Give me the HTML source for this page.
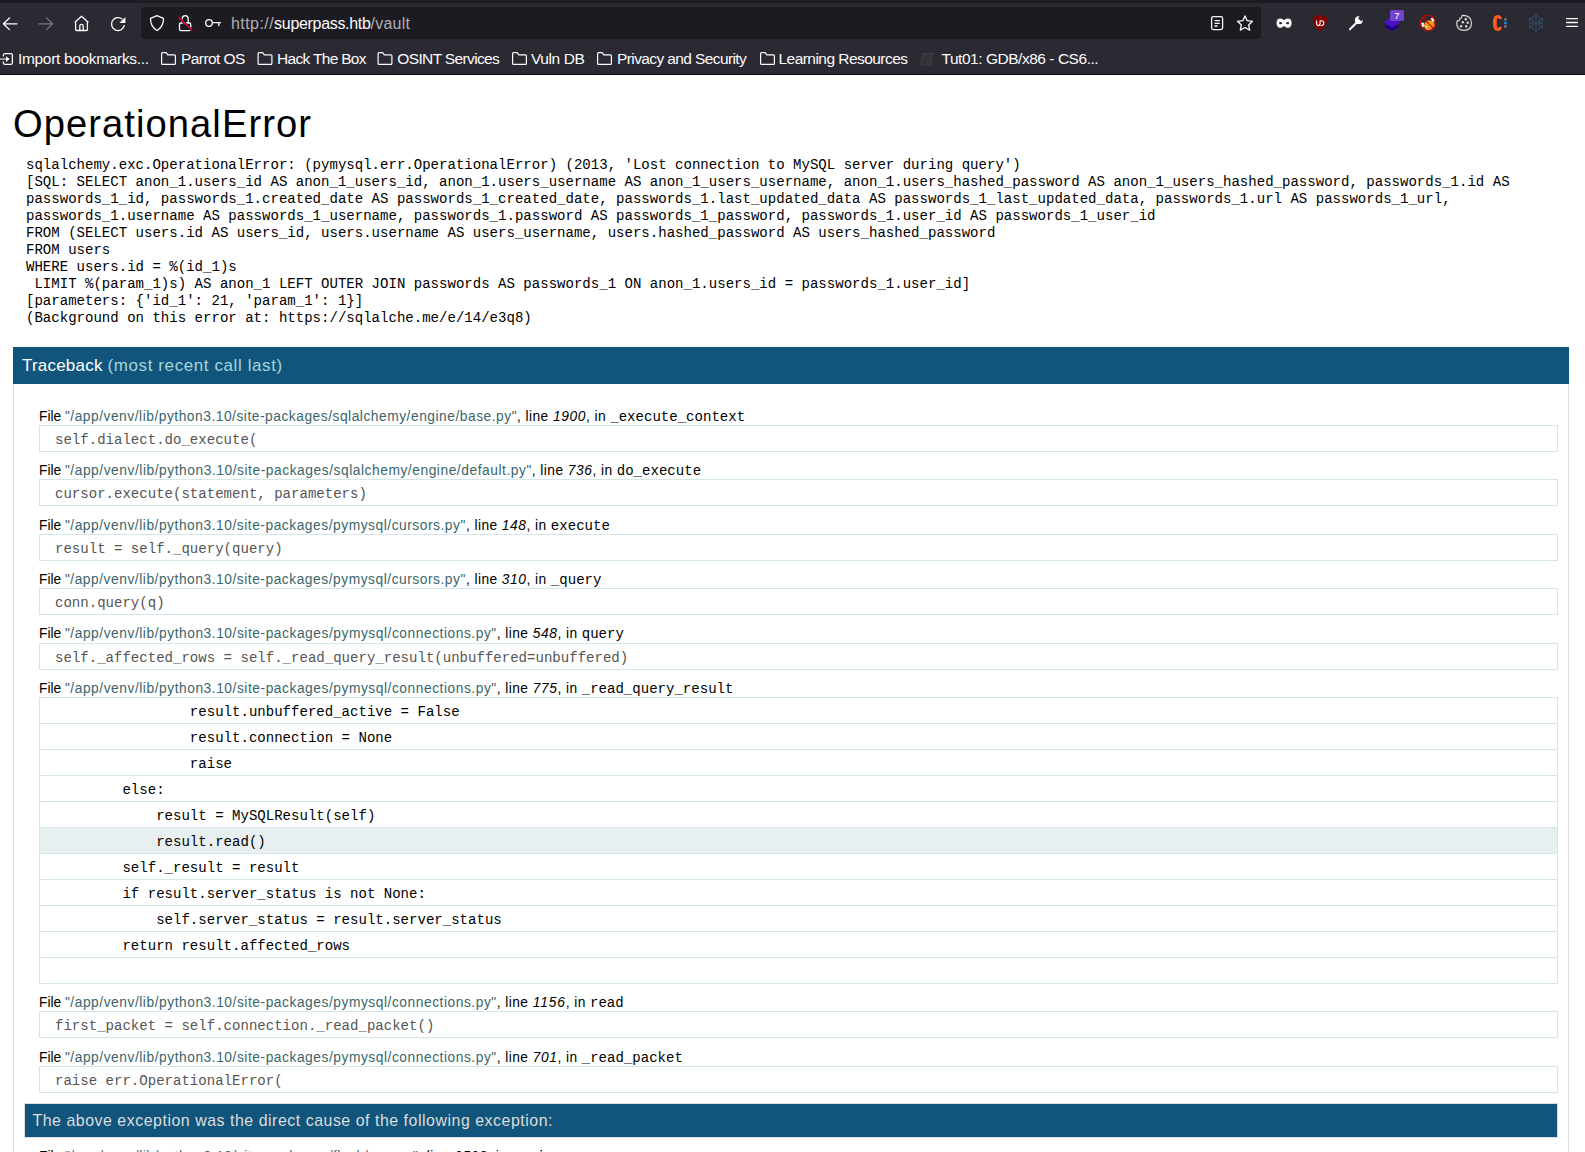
<!DOCTYPE html>
<html><head><meta charset="utf-8">
<style>
*{box-sizing:border-box}
html,body{margin:0;padding:0;background:#fff;width:1585px;height:1152px;overflow:hidden;position:relative}
body{font-family:"Liberation Sans",sans-serif;color:#000}
#chrome{position:absolute;left:0;top:0;width:1585px;height:75px;font-family:"Liberation Sans",sans-serif}
#url{position:absolute;left:231px;top:13.5px;height:20px;font-size:16px;line-height:20px;color:#aeaeb3;white-space:pre}
#url b{font-weight:normal;color:#fbfbfe}
.bm{position:absolute;top:48px;height:22px;font-size:15px;line-height:22px;color:#fbfbfe;white-space:pre}
#page{position:absolute;left:0;top:75px;width:1585px;height:1077px;overflow:hidden}
h1{position:absolute;left:13px;top:28px;margin:0;font-weight:normal;font-size:36px;line-height:42px;white-space:pre}
#detail{position:absolute;left:26px;top:81.6px;margin:0;font-family:"Liberation Mono",monospace;font-size:14.065px;line-height:17px;white-space:pre}
h2{position:absolute;left:13px;top:272px;width:1556px;height:37px;margin:0;padding:0 9px;background:#11557C;color:#fff;font-weight:normal;font-size:16px;line-height:37px;white-space:pre}
h2 em{font-style:normal;color:#A5D6D9}
#tb{position:absolute;left:13px;top:309px;width:1556px;height:900px;border:1px solid #ddd;border-top:none}
#frames{position:absolute;left:25px;top:22.8px;width:1519px}
.fr h4{margin:9.1px 0 1.3px 0;height:17px;padding-top:1px;font-weight:normal;font-size:13px;line-height:17px;white-space:pre}
.fr h4 cite{font-style:normal;color:#3B666B}
.fr h4 em{font-style:italic}
.fr h4 code{font-family:"Liberation Mono",monospace;font-size:14.065px}
.fr:first-child h4{margin-top:0}
pre{margin:0;padding:6px 0 3px 15px;border:1px solid #D3E7E9;height:27px;font-family:"Liberation Mono",monospace;font-size:14.065px;line-height:17px;white-space:pre;color:#555;background:#fff}
.exp pre{color:#000}
.exp pre+pre{border-top:none;height:26px}
.exp pre.cur{background:#E8EFF0}
.div{margin:10.5px 0 0 -15px;padding:1px 7.5px 0;height:34.5px;background:#11557C;color:#ddd;border:1px solid #ddd;font-size:15px;line-height:32.5px;white-space:pre}
</style></head>
<body>
<div id="chrome">
<svg width="1585" height="75" viewBox="0 0 1585 75" style="position:absolute;left:0;top:0">
 <rect x="0" y="0" width="1585" height="75" fill="#2b2a33"/>
 <rect x="0" y="0" width="1585" height="3" fill="#1c1b22"/>
 <rect x="0" y="74" width="1585" height="1" fill="#0b0b0e"/>
 <rect x="141" y="7" width="1120" height="32" rx="4" fill="#1c1b22"/>
 <!-- back -->
 <g fill="none" stroke="#fbfbfe" stroke-width="1.3" stroke-linecap="round" stroke-linejoin="round">
  <path d="M17 23.8H3.6M9.5 18 3.4 23.8 9.5 29.6"/>
 </g>
 <g fill="none" stroke="#76757c" stroke-width="1.3" stroke-linecap="round" stroke-linejoin="round">
  <path d="M39 23.8H52.4M46.5 18 52.6 23.8 46.5 29.6"/>
 </g>
 <!-- home -->
 <g fill="none" stroke="#fbfbfe" stroke-width="1.3" stroke-linejoin="round">
  <path d="M74.6 22.4 81.5 16.2 88.4 22.4M75.6 21.6V29.4Q75.6 30.5 76.7 30.5H86.3Q87.4 30.5 87.4 29.4V21.6"/>
  <path d="M79.8 30.5V25.8Q79.8 24.3 81.5 24.3 83.2 24.3 83.2 25.8V30.5"/>
 </g>
 <!-- reload -->
 <g fill="none" stroke="#fbfbfe" stroke-width="1.3">
  <path d="M124.4 25.2A6.5 6.5 0 1 1 122.3 19.2"/>
 </g>
 <path d="M125.4 17 125.4 23 119.4 23Z" fill="#fbfbfe"/>
 <!-- shield -->
 <path d="M157 15.7 163.5 18.3Q163.8 26.5 157 30.5 150.2 26.5 150.5 18.3Z" fill="none" stroke="#fbfbfe" stroke-width="1.3" stroke-linejoin="round"/>
 <!-- lock -->
 <g fill="none" stroke="#fbfbfe" stroke-width="1.3">
  <path d="M182.2 23V18.8Q182.2 15.6 185.2 15.6 188.2 15.6 188.2 18.8V23"/>
  <rect x="179.5" y="23" width="11.2" height="7.6" rx="1.3"/>
 </g>
 <path d="M178.4 17.2 192.4 30.6" stroke="#1c1b22" stroke-width="2.6"/>
 <path d="M178.4 17.2 192.4 30.6" stroke="#ff0039" stroke-width="1.3"/>
 <!-- key -->
 <g fill="none" stroke="#fbfbfe" stroke-width="1.3">
  <circle cx="209" cy="23" r="3.3"/>
  <path d="M212.3 22.6H221M218.8 22.6V26.2"/>
 </g>
 <!-- reader -->
 <g fill="none" stroke="#fbfbfe" stroke-width="1.3">
  <rect x="1211.6" y="16.6" width="11" height="13" rx="1.8"/>
  <path d="M1214.5 20.6H1219.8M1214.5 23.3H1219.8M1214.5 26H1217.6"/>
 </g>
 <!-- star -->
 <path d="M1245 15.9 1247.2 20.7 1252.5 21.3 1248.6 24.9 1249.7 30.1 1245 27.5 1240.3 30.1 1241.4 24.9 1237.5 21.3 1242.8 20.7Z" fill="none" stroke="#fbfbfe" stroke-width="1.3" stroke-linejoin="round"/>
 <!-- mask -->
 <path d="M1276.6 22.8Q1276.6 18.4 1280.2 18.4Q1282.6 18.4 1284 20.2Q1285.4 18.4 1287.8 18.4Q1291.6 18.4 1291.6 22.8Q1291.6 27.9 1287.8 27.9Q1285.6 27.9 1284 26.1Q1282.4 27.9 1280.2 27.9Q1276.6 27.9 1276.6 22.8Z" fill="#fbfbfe"/>
 <ellipse cx="1280.6" cy="23.2" rx="1.6" ry="1.1" fill="#2b2a33"/>
 <ellipse cx="1287.6" cy="23.2" rx="1.6" ry="1.1" fill="#2b2a33"/>
 <!-- ublock -->
 <path d="M1320 15 1327.2 17.3Q1327.2 27.6 1320 31 1312.9 27.6 1312.9 17.3Z" fill="#800000"/>
 <path d="M1316.6 20.6V23.6Q1316.6 25.6 1318.4 25.6 1320.1 25.6 1320.1 23.6V20.6M1320.6 20.7H1321.3Q1323.8 20.7 1323.8 23.1 1323.8 25.5 1321.3 25.5H1320.6" fill="none" stroke="#fff" stroke-width="1.1"/>
 <!-- wrench -->
 <path d="M1350 29.3 1356.8 22.5" stroke="#fbfbfe" stroke-width="2" stroke-linecap="round"/>
 <circle cx="1358.8" cy="20.2" r="3.9" fill="#fbfbfe"/>
 <path d="M1360.2 15.6 1363.6 19 1361.2 21.3 1358.1 18.2Z" fill="#2b2a33"/>
 <!-- layers -->
 <path d="M1392 22.6 1400.2 26.7 1392 31 1383.8 26.7Z" fill="#1c0082"/>
 <path d="M1392 17 1400.2 22.2 1392 27.4 1383.8 22.2Z" fill="#4a12c8"/>
 <rect x="1390" y="10" width="14" height="11" rx="1.5" fill="#7143d0"/>
 <text x="1397" y="19" font-family="Liberation Sans" font-size="9.6" fill="#fff" text-anchor="middle">7</text>
 <!-- fox -->
 <path d="M1424 25.5Q1424.5 20.6 1429.6 20.2 1434.6 20.6 1434.8 25.6 1434.4 30 1429.2 30.2 1424.2 30 1424 25.5Z" fill="#f09a12"/>
 <path d="M1430.6 18.2 1433.4 17.4 1434.6 21.6 1432.4 21.8Z" fill="#fff"/>
 <path d="M1420.8 23 1423.6 22.4 1424.4 26.6 1422 27.2Z" fill="#fff"/>
 <circle cx="1426.4" cy="26.6" r="0.8" fill="#fff"/>
 <path d="M1425.6 29.6H1431" stroke="#b8c4cc" stroke-width="0.8"/>
 <circle cx="1428" cy="23" r="7.6" fill="none" stroke="#d40000" stroke-width="1.4"/>
 <path d="M1422.4 17.4 1433.6 28.6" stroke="#d40000" stroke-width="1.3"/>
 <!-- cookie -->
 <path d="M1462.2 15.4Q1471.4 15.2 1471.4 23 1471.4 30.4 1464 30.4 1456.8 30.4 1456.8 23.6 1456.8 21.6 1457.4 20.6 1458.6 21.2 1459.4 20.2 1460.2 19.2 1459.8 18.4 1461.6 18.4 1461.8 16.6Z" fill="none" stroke="#d8d8d8" stroke-width="1.2" stroke-linejoin="round"/>
 <g fill="#d8d8d8"><circle cx="1465.8" cy="19.3" r="1.2"/><circle cx="1462.8" cy="22.3" r="1.2"/><circle cx="1467.7" cy="22.7" r="1.2"/><circle cx="1461.1" cy="26.2" r="1.2"/><circle cx="1466.2" cy="26.3" r="1.2"/></g>
 <!-- C: -->
 <path d="M1502 18.6Q1501 15 1497.6 15 1492.9 15 1492.9 23 1492.9 30.9 1497.6 30.9 1501 30.9 1502 27.4L1499.4 26.6Q1499 28 1497.8 28 1496.7 28 1496.7 23 1496.7 17.8 1497.8 17.8 1499 17.8 1499.4 19.4Z" fill="#ff5a1f"/>
 <circle cx="1505.4" cy="19.3" r="1.5" fill="#707070"/>
 <circle cx="1505.4" cy="23" r="1.6" fill="#1a86f0"/>
 <circle cx="1505.4" cy="26.6" r="1.5" fill="#707070"/>
 <!-- globe -->
 <g fill="none" stroke="#2f4c6c" stroke-width="0.7">
  <path d="M1536 15.2 1542.6 19.1V26.9L1536 30.8 1529.4 26.9V19.1Z"/>
  <path d="M1536 15.2V30.8M1529.4 19.1 1542.6 26.9M1542.6 19.1 1529.4 26.9M1532.7 17.2V28.8M1539.3 17.2V28.8M1529.4 23H1542.6"/>
 </g>
 <g fill="#36587d"><circle cx="1536" cy="15.6" r="0.9"/><circle cx="1536" cy="30.4" r="0.9"/><circle cx="1529.8" cy="19.3" r="0.9"/><circle cx="1542.2" cy="19.3" r="0.9"/><circle cx="1529.8" cy="26.7" r="0.9"/><circle cx="1542.2" cy="26.7" r="0.9"/><circle cx="1540" cy="23" r="0.9"/></g>
 <!-- hamburger -->
 <path d="M1566 18.6H1578M1566 22.5H1578M1566 26.4H1578" stroke="#fbfbfe" stroke-width="1.3"/>
</svg><svg width="1585" height="75" viewBox="0 0 1585 75" style="position:absolute;left:0;top:0"><path d="M3.4 56.6V55.2Q3.4 53.6 5 53.6H10.8Q12.4 53.6 12.4 55.2V62.8Q12.4 64.4 10.8 64.4H5Q3.4 64.4 3.4 62.8V61.6" fill="none" stroke="#fbfbfe" stroke-width="1.25"/><path d="M0 59.1H6.5" stroke="#c8c8cc" stroke-width="1.3"/><path d="M6 56.3 9.6 59.1 6 61.9Z" fill="#fbfbfe"/><path d="M161.6 53.6Q161.6 52.6 162.6 52.6H166.2L167.8 54.8H174.4Q175.4 54.8 175.4 55.8V63.4Q175.4 64.4 174.4 64.4H162.6Q161.6 64.4 161.6 63.4Z" fill="none" stroke="#fbfbfe" stroke-width="1.2" stroke-linejoin="round"/><path d="M258.1 53.6Q258.1 52.6 259.1 52.6H262.7L264.3 54.8H270.9Q271.9 54.8 271.9 55.8V63.4Q271.9 64.4 270.9 64.4H259.1Q258.1 64.4 258.1 63.4Z" fill="none" stroke="#fbfbfe" stroke-width="1.2" stroke-linejoin="round"/><path d="M378.1 53.6Q378.1 52.6 379.1 52.6H382.7L384.3 54.8H390.9Q391.9 54.8 391.9 55.8V63.4Q391.9 64.4 390.9 64.4H379.1Q378.1 64.4 378.1 63.4Z" fill="none" stroke="#fbfbfe" stroke-width="1.2" stroke-linejoin="round"/><path d="M512.6 53.6Q512.6 52.6 513.6 52.6H517.2L518.8 54.8H525.4Q526.4 54.8 526.4 55.8V63.4Q526.4 64.4 525.4 64.4H513.6Q512.6 64.4 512.6 63.4Z" fill="none" stroke="#fbfbfe" stroke-width="1.2" stroke-linejoin="round"/><path d="M597.6 53.6Q597.6 52.6 598.6 52.6H602.2L603.8 54.8H610.4Q611.4 54.8 611.4 55.8V63.4Q611.4 64.4 610.4 64.4H598.6Q597.6 64.4 597.6 63.4Z" fill="none" stroke="#fbfbfe" stroke-width="1.2" stroke-linejoin="round"/><path d="M760.6 53.6Q760.6 52.6 761.6 52.6H765.2L766.8 54.8H773.4Q774.4 54.8 774.4 55.8V63.4Q774.4 64.4 773.4 64.4H761.6Q760.6 64.4 760.6 63.4Z" fill="none" stroke="#fbfbfe" stroke-width="1.2" stroke-linejoin="round"/><path d="M922 53 933.6 53 931.4 65.6 919.8 65.6Z" fill="#3a3a3c"/><path d="M923.6 54.6 931.8 54.6 930.2 63.8 922 63.8Z" fill="#333236"/></svg>
<div id="url"><span style="letter-spacing:0.44px">http://</span><b style="letter-spacing:-0.315px">superpass.htb</b><span style="letter-spacing:0.23px">/vault</span></div>
<div class="bm" style="left:18.0px"><span style="letter-spacing:-0.333px;font-size:15.500px">Import bookmarks...</span></div><div class="bm" style="left:181.0px"><span style="letter-spacing:-0.562px;font-size:15.500px">Parrot OS</span></div><div class="bm" style="left:277.0px"><span style="letter-spacing:-0.682px;font-size:15.500px">Hack The Box</span></div><div class="bm" style="left:397.3px"><span style="letter-spacing:-0.638px;font-size:15.500px">OSINT Services</span></div><div class="bm" style="left:531.0px"><span style="letter-spacing:-0.417px;font-size:15.500px">Vuln DB</span></div><div class="bm" style="left:617.0px"><span style="letter-spacing:-0.605px;font-size:15.500px">Privacy and Security</span></div><div class="bm" style="left:778.5px"><span style="letter-spacing:-0.541px;font-size:15.500px">Learning Resources</span></div><div class="bm" style="left:941.5px"><span style="letter-spacing:-0.468px;font-size:15.500px">Tut01: GDB/x86 - CS6...</span></div>
</div>
<div id="page">
<h1><span style="letter-spacing:1.057px;font-size:38.160px">OperationalError</span></h1>
<p id="detail">sqlalchemy.exc.OperationalError: (pymysql.err.OperationalError) (2013, 'Lost connection to MySQL server during query')
[SQL: SELECT anon_1.users_id AS anon_1_users_id, anon_1.users_username AS anon_1_users_username, anon_1.users_hashed_password AS anon_1_users_hashed_password, passwords_1.id AS
passwords_1_id, passwords_1.created_date AS passwords_1_created_date, passwords_1.last_updated_data AS passwords_1_last_updated_data, passwords_1.url AS passwords_1_url,
passwords_1.username AS passwords_1_username, passwords_1.password AS passwords_1_password, passwords_1.user_id AS passwords_1_user_id
FROM (SELECT users.id AS users_id, users.username AS users_username, users.hashed_password AS users_hashed_password
FROM users
WHERE users.id = %(id_1)s
 LIMIT %(param_1)s) AS anon_1 LEFT OUTER JOIN passwords AS passwords_1 ON anon_1.users_id = passwords_1.user_id]
[parameters: {'id_1': 21, 'param_1': 1}]
(Background on this error at: https://sqlalche.me/e/14/e3q8)</p>
<h2><span style="letter-spacing:0.241px;font-size:16.960px">Traceback </span><em style="letter-spacing:0.620px;font-size:16.960px">(most recent call last)</em></h2>
<div id="tb"><div id="frames">
<div class="fr"><h4><span style="letter-spacing:-0.025px;font-size:13.780px">File </span><cite style="letter-spacing:0.523px;font-size:13.780px">"/app/venv/lib/python3.10/site-packages/sqlalchemy/engine/base.py"</cite><span style="letter-spacing:0.422px;font-size:13.780px">, line </span><em style="letter-spacing:0.617px;font-size:13.780px">1900</em><span style="letter-spacing:0.409px;font-size:13.780px">, in </span><code>_execute_context</code></h4><pre>self.dialect.do_execute(</pre></div>
<div class="fr"><h4><span style="letter-spacing:-0.025px;font-size:13.780px">File </span><cite style="letter-spacing:0.548px;font-size:13.780px">"/app/venv/lib/python3.10/site-packages/sqlalchemy/engine/default.py"</cite><span style="letter-spacing:0.422px;font-size:13.780px">, line </span><em style="letter-spacing:0.620px;font-size:13.780px">736</em><span style="letter-spacing:0.409px;font-size:13.780px">, in </span><code>do_execute</code></h4><pre>cursor.execute(statement, parameters)</pre></div>
<div class="fr"><h4><span style="letter-spacing:-0.025px;font-size:13.780px">File </span><cite style="letter-spacing:0.536px;font-size:13.780px">"/app/venv/lib/python3.10/site-packages/pymysql/cursors.py"</cite><span style="letter-spacing:0.422px;font-size:13.780px">, line </span><em style="letter-spacing:0.620px;font-size:13.780px">148</em><span style="letter-spacing:0.409px;font-size:13.780px">, in </span><code>execute</code></h4><pre>result = self._query(query)</pre></div>
<div class="fr"><h4><span style="letter-spacing:-0.025px;font-size:13.780px">File </span><cite style="letter-spacing:0.536px;font-size:13.780px">"/app/venv/lib/python3.10/site-packages/pymysql/cursors.py"</cite><span style="letter-spacing:0.422px;font-size:13.780px">, line </span><em style="letter-spacing:0.620px;font-size:13.780px">310</em><span style="letter-spacing:0.409px;font-size:13.780px">, in </span><code>_query</code></h4><pre>conn.query(q)</pre></div>
<div class="fr"><h4><span style="letter-spacing:-0.025px;font-size:13.780px">File </span><cite style="letter-spacing:0.542px;font-size:13.780px">"/app/venv/lib/python3.10/site-packages/pymysql/connections.py"</cite><span style="letter-spacing:0.422px;font-size:13.780px">, line </span><em style="letter-spacing:0.620px;font-size:13.780px">548</em><span style="letter-spacing:0.409px;font-size:13.780px">, in </span><code>query</code></h4><pre>self._affected_rows = self._read_query_result(unbuffered=unbuffered)</pre></div>
<div class="fr exp"><h4><span style="letter-spacing:-0.025px;font-size:13.780px">File </span><cite style="letter-spacing:0.542px;font-size:13.780px">"/app/venv/lib/python3.10/site-packages/pymysql/connections.py"</cite><span style="letter-spacing:0.422px;font-size:13.780px">, line </span><em style="letter-spacing:0.620px;font-size:13.780px">775</em><span style="letter-spacing:0.409px;font-size:13.780px">, in </span><code>_read_query_result</code></h4><pre>                result.unbuffered_active = False</pre><pre>                result.connection = None</pre><pre>                raise</pre><pre>        else:</pre><pre>            result = MySQLResult(self)</pre><pre class=cur>            result.read()</pre><pre>        self._result = result</pre><pre>        if result.server_status is not None:</pre><pre>            self.server_status = result.server_status</pre><pre>        return result.affected_rows</pre><pre> </pre></div>
<div class="fr"><h4><span style="letter-spacing:-0.025px;font-size:13.780px">File </span><cite style="letter-spacing:0.542px;font-size:13.780px">"/app/venv/lib/python3.10/site-packages/pymysql/connections.py"</cite><span style="letter-spacing:0.422px;font-size:13.780px">, line </span><em style="letter-spacing:0.871px;font-size:13.780px">1156</em><span style="letter-spacing:0.409px;font-size:13.780px">, in </span><code>read</code></h4><pre>first_packet = self.connection._read_packet()</pre></div>
<div class="fr"><h4><span style="letter-spacing:-0.025px;font-size:13.780px">File </span><cite style="letter-spacing:0.542px;font-size:13.780px">"/app/venv/lib/python3.10/site-packages/pymysql/connections.py"</cite><span style="letter-spacing:0.422px;font-size:13.780px">, line </span><em style="letter-spacing:0.620px;font-size:13.780px">701</em><span style="letter-spacing:0.409px;font-size:13.780px">, in </span><code>_read_packet</code></h4><pre>raise err.OperationalError(</pre></div>
<div class="div"><span style="letter-spacing:0.536px;font-size:15.900px">The above exception was the direct cause of the following exception:</span></div>
<div class="fr"><h4><span style="letter-spacing:-0.025px;font-size:13.780px">File </span><cite style="letter-spacing:0.535px;font-size:13.780px">"/app/venv/lib/python3.10/site-packages/flask/app.py"</cite><span style="letter-spacing:0.422px;font-size:13.780px">, line </span><em style="letter-spacing:0.617px;font-size:13.780px">2528</em><span style="letter-spacing:0.409px;font-size:13.780px">, in </span><code>wsgi_app</code></h4></div>
</div></div>
</div>
</body></html>
